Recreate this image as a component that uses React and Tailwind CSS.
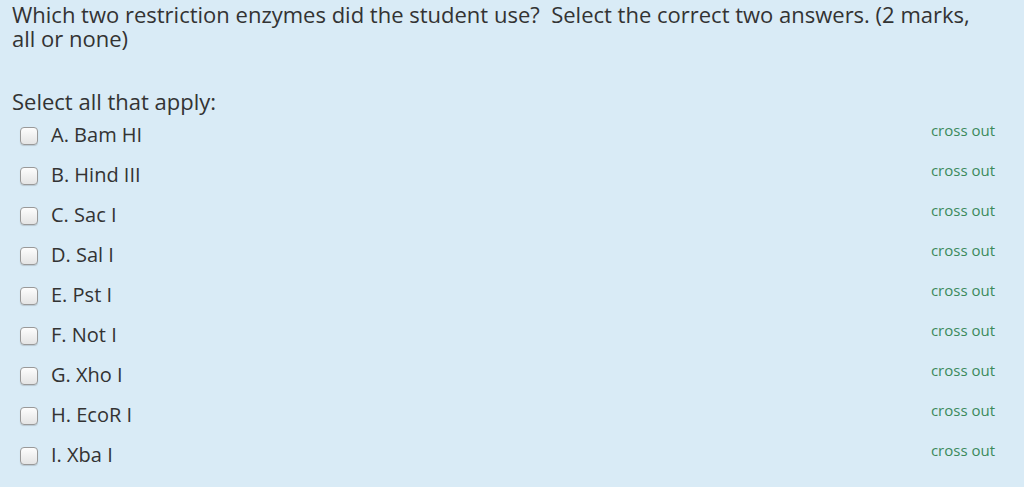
import React from 'react';

const OPTIONS = ['A. Bam HI', 'B. Hind III', 'C. Sac I', 'D. Sal I', 'E. Pst I', 'F. Not I', 'G. Xho I', 'H. EcoR I', 'I. Xba I'];

export default function App() {
  return (
    <div className="h-[487px] w-full bg-[#d9ebf6] text-[#333] overflow-hidden" style={{ fontFamily: '"Open Sans", sans-serif' }}>
      <div className="pl-[12px] pt-[2px]">
        <p className="pr-[40px] text-[22px] leading-[24px]">
          Which two restriction enzymes did the student use?&nbsp; Select the correct two answers. (2 marks, all or none)
        </p>
        <p className="mt-[37px] text-[22px] leading-[28px]">Select all that apply:</p>
        <ul>
          {OPTIONS.map((opt) => (
            <li key={opt} className="flex items-center h-[40px]">
              <span className="ml-[8px] mt-[2px] w-[18px] h-[18px] rounded-[4px] border border-[#999] bg-gradient-to-b from-[#fdfdfd] to-[#e4e4e4] shadow-[0_1px_1px_rgba(0,0,0,0.15)]" />
              <span className="ml-[13px] text-[20px] leading-[24px]">{opt}</span>
              <span className="ml-auto mr-[29px] -mt-[9px] text-[15px] text-[#3b8a5c]">cross out</span>
            </li>
          ))}
        </ul>
      </div>
    </div>
  );
}
